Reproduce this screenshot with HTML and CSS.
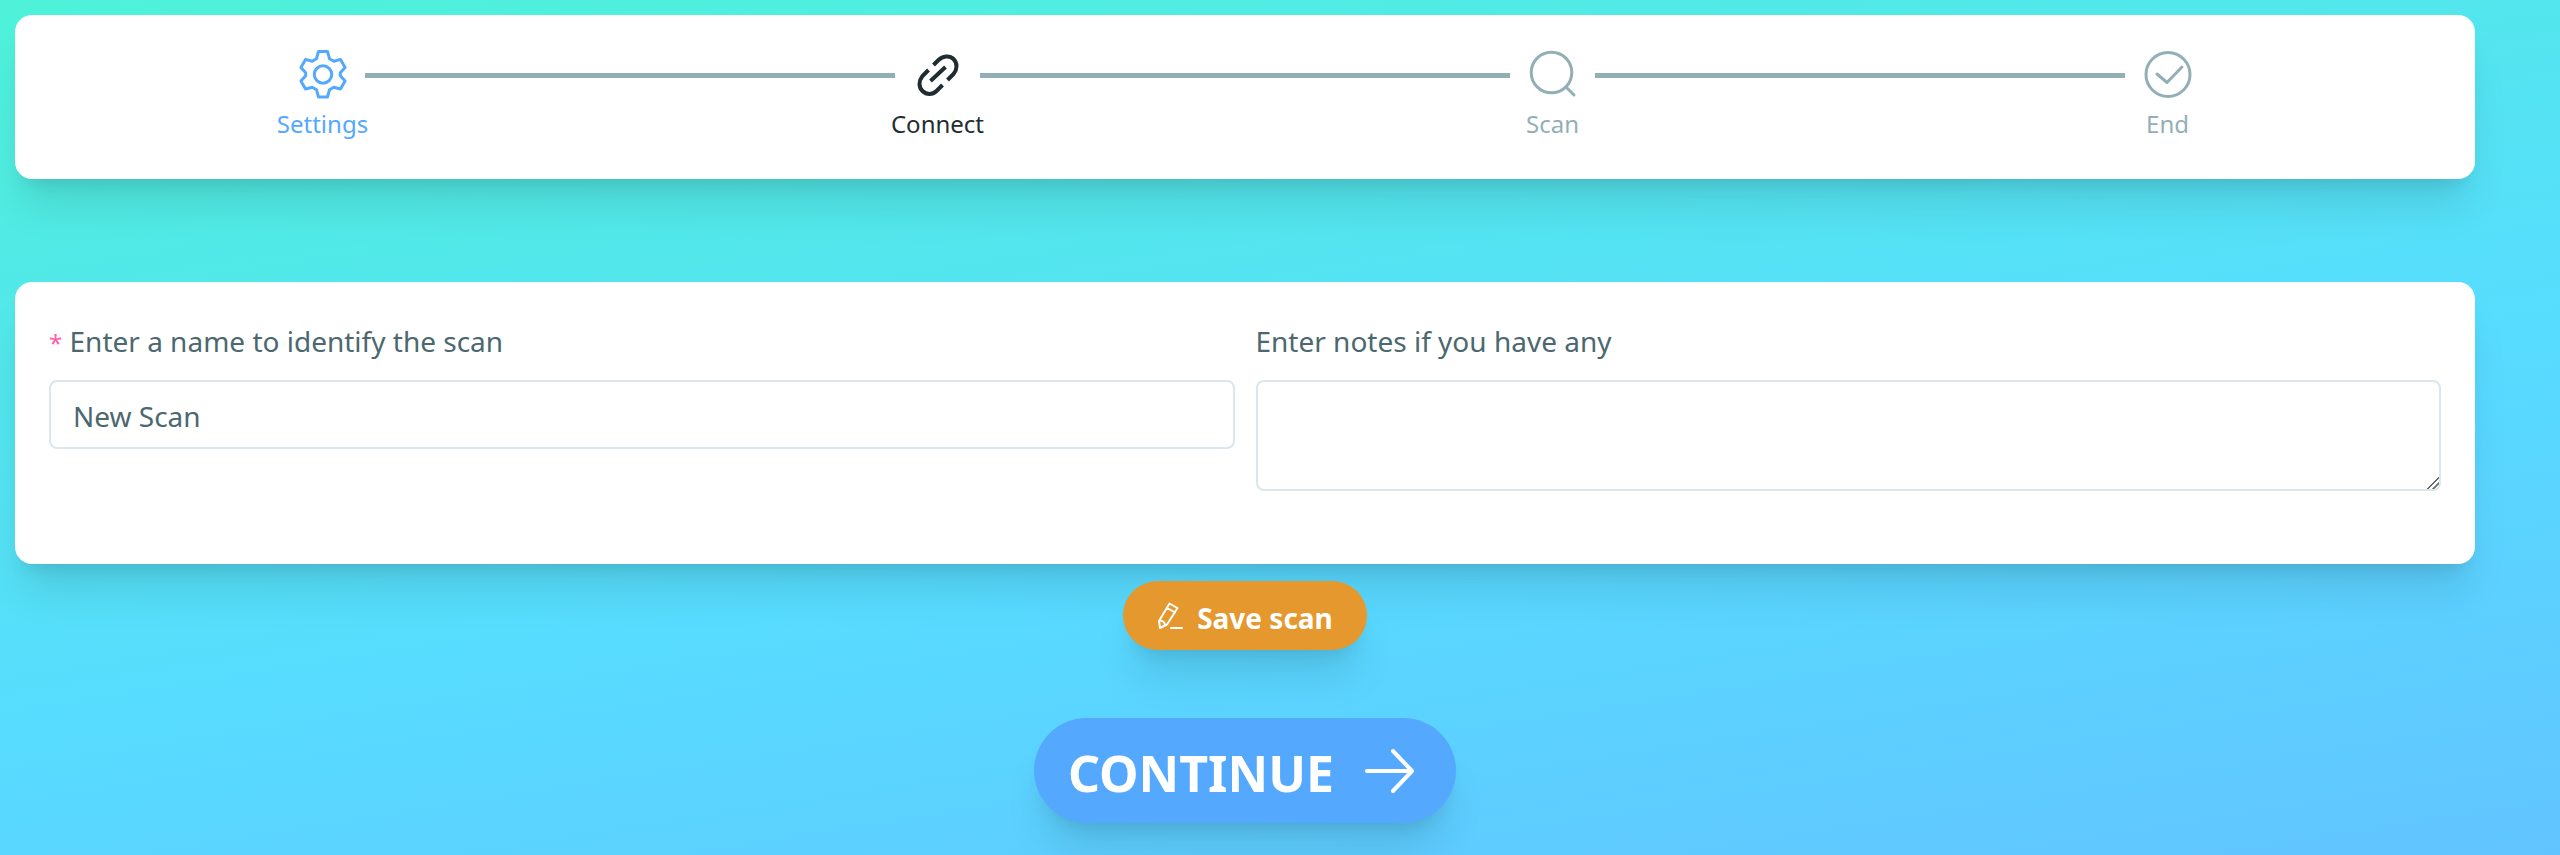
FILE: index.html
```html
<!DOCTYPE html>
<html lang="en">
<head>
  <meta charset="UTF-8">
  <meta name="viewport" content="width=device-width, initial-scale=1.0">
  <title>New scan</title>
  <link rel="stylesheet" href="styles.css">
</head>
<body>
  <main class="page">
    <ol class="card steps">
      <li class="step done">
        <svg class="icon" viewBox="0 0 50 50">
          <path d="M20.5 2.5h9l2 7.2 4.3 2.5 6.7-1.8 4.6 8-4.8 5.3v3l4.8 5.3-4.6 8-6.7-1.8-4.3 2.5-2 7.3h-9l-2-7.3-4.3-2.5-6.7 1.8-4.6-8 4.8-5.3v-3l-4.8-5.3 4.6-8 6.7 1.8 4.3-2.5z"/>
          <circle cx="25" cy="25.5" r="8.7"/>
        </svg>
        <span>Settings</span>
      </li>
      <li class="step current">
        <svg class="icon" viewBox="0 0 50 50">
          <path d="M20.500 16l5-5c4-4 11-5 15-1s4 10 0 15l-6 6M15.500 21l-6 6c-4 5-4 11 0 15s10 4 14 0l6-6M17.500 32l15-14"/>
        </svg>
        <span>Connect</span>
      </li>
      <li class="step">
        <svg class="icon" viewBox="0 0 50 50">
          <circle cx="23.5" cy="23.5" r="20.3"/>
          <path d="M38 38l8 8"/>
        </svg>
        <span>Scan</span>
      </li>
      <li class="step">
        <svg class="icon" viewBox="0 0 50 50">
          <circle cx="25" cy="25.5" r="22"/>
          <path d="M14 25l10 8.5 15-15.5"/>
        </svg>
        <span>End</span>
      </li>
    </ol>

    <form class="scan-form">
      <div class="card fields">
        <div class="field">
          <label for="name"><span class="required">*</span> Enter a name to identify the scan</label>
          <input type="text" id="name" value="New Scan" required>
        </div>
        <div class="field">
          <label for="notes">Enter notes if you have any</label>
          <textarea id="notes" rows="2"></textarea>
        </div>
      </div>
      <button type="button" class="btn save">
        <svg class="pencil" viewBox="0 0 26 28">
          <path d="M2 19L12.5 1.5l8 4.5L10 22.500l-7 3.500zM10 6l8 4.500M2 19q5-1 6 4M14 26h11"/>
        </svg>
        <span class="btn-text">Save scan</span>
      </button>
      <button type="submit" class="btn continue">
        <span class="btn-text">CONTINUE</span>
        <svg class="arrow" viewBox="0 0 52 46">
          <path d="M3 23h45M29 3l19 20-19 20"/>
        </svg>
      </button>
    </form>
  </main>
</body>
</html>
```
FILE: styles.css
```css
* {
  box-sizing: border-box;
}
body {
  margin: 0;
  min-height: 100vh;
  background: linear-gradient(171deg, #4ef2d8, #57dcff 58%, #62c4ff);
  font-family: "Segoe UI", "Noto Sans", sans-serif;
  font-size: 28px;
  color: #4b6870;
}
.page {
  padding: 15px 85px 32px 15px;
}
.card {
  background: #fff;
  border-radius: 17px;
  box-shadow: 0 34px 42px -8px rgba(0, 0, 0, 0.1), 0 14px 17px -10px rgba(0, 0, 0, 0.1);
}

/* progress steps */
.steps {
  display: grid;
  grid-template-columns: repeat(4, 1fr);
  margin: 0 0 103px;
  padding: 34px 0 37px;
  list-style: none;
}
.step {
  position: relative;
  display: flex;
  flex-direction: column;
  align-items: center;
  gap: 6px;
  font-size: 24px;
  line-height: 37px;
  color: #93afb6;
}
.step:not(:last-child)::after {
  content: "";
  position: absolute;
  top: 24px;
  left: calc(50% + 42px);
  width: calc(100% - 85px);
  height: 5px;
  background: #93afb6;
}
.step.done {
  color: #54a9ff;
}
.step.current {
  color: #1f2d31;
}
svg {
  fill: none;
  stroke: currentColor;
  stroke-width: 3;
  stroke-linecap: round;
  stroke-linejoin: round;
}
.icon {
  width: 50px;
  height: 50px;
}
.current .icon {
  stroke-width: 4;
  stroke-linecap: butt;
}

/* form */
.scan-form {
  display: flex;
  flex-direction: column;
  align-items: center;
}
.fields {
  display: grid;
  grid-template-columns: 1fr 1fr;
  gap: 21px;
  width: 100%;
  padding: 34px 34px 73px;
}
.field {
  display: flex;
  flex-direction: column;
  gap: 14px;
}
label {
  line-height: 50px;
}
.required {
  color: #ff5fa8;
  font-size: 24px;
  line-height: 1;
}
input,
textarea {
  width: 100%;
  padding: 12px 22px 9px;
  border: 2px solid #dae7ec;
  border-radius: 8px;
  background: #fff;
  font: inherit;
  color: inherit;
}
input {
  height: 69px;
}
textarea {
  display: block;
  height: 111px;
  resize: vertical;
}
textarea::-webkit-resizer {
  background: linear-gradient(135deg, transparent 57%, #666 58% 64%, transparent 65% 76%, #666 77% 83%, transparent 84%);
}

/* buttons */
.btn {
  display: flex;
  align-items: center;
  border: 0;
  border-radius: 53px;
  color: #fff;
  font-family: inherit;
  font-weight: 700;
  box-shadow: 0 34px 42px -8px rgba(0, 0, 0, 0.1), 0 14px 17px -10px rgba(0, 0, 0, 0.1);
}
.btn-text {
  padding-top: 4px;
}
.save {
  gap: 14px;
  height: 69px;
  margin-top: 17px;
  padding: 0 34px;
  background: #e4982d;
  font-size: 28px;
}
.continue {
  gap: 30px;
  height: 105px;
  margin-top: 68px;
  padding: 0 40px 0 34px;
  background: #54a9ff;
  font-size: 50px;
}
.pencil {
  width: 26px;
  height: 28px;
  stroke-width: 2;
}
.arrow {
  width: 52px;
  height: 46px;
  stroke-width: 4;
}
```
